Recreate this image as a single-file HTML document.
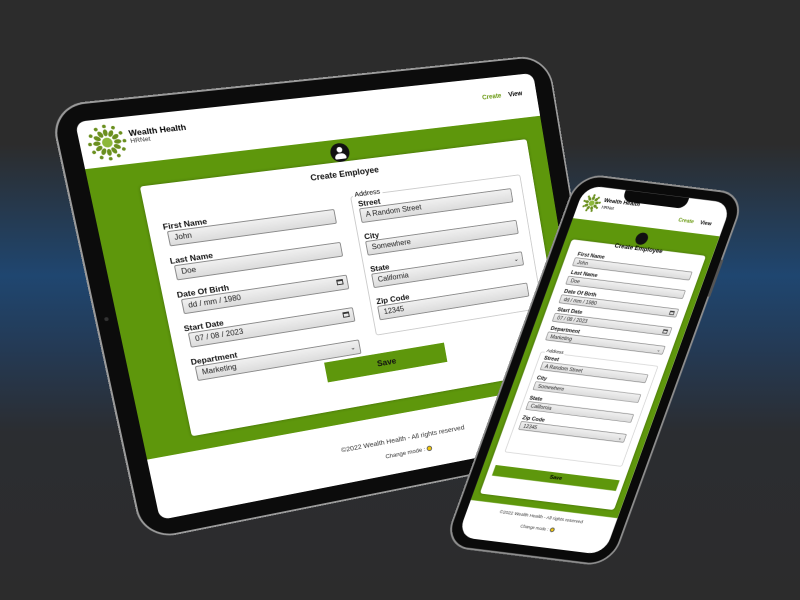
<!DOCTYPE html>
<html><head><meta charset="utf-8">
<style>
*{margin:0;padding:0;box-sizing:border-box}
html,body{width:800px;height:600px;overflow:hidden}
body{position:relative;font-family:"Liberation Sans",sans-serif;
background:linear-gradient(to bottom,#2c2c2c 0%,#2c2c2c 24%,#1f4670 46%,#243a55 58%,#2b2d31 72%,#2c2c2c 100%);}
.abs{position:absolute;white-space:nowrap}
.dev{position:absolute;left:0;top:0;transform-origin:0 0}
.tscreen{width:480px;height:420px;background:#fff;border-radius:10px;overflow:hidden;position:absolute;left:0;top:0}
.green{position:absolute;left:0;background:#5e970c}
.card{position:absolute;background:#fff;border-radius:3px;box-shadow:0 0 3px rgba(0,0,0,.3)}
.lbl{position:absolute;font-weight:bold;font-size:8px;color:#111;white-space:nowrap}
.inp{position:absolute;background:linear-gradient(#f0f0f0,#dcdcdc);border:1px solid #8a8a8a;border-radius:2px;font-size:7.5px;color:#222;padding-left:5px;line-height:12px;white-space:nowrap}
.t .lbl{font-size:8.5px}
.t .inp{font-size:8px;line-height:14px}
.cal{position:absolute;right:4px;top:3px;width:7px;height:6px;border:1px solid #333;border-top-width:2px}
.chev{position:absolute;right:4px;top:1px;font-size:7px;color:#333}
</style></head><body>

<!-- TABLET -->
<div class="dev t" style="transform:matrix3d(1.07569,-0.08544,0,0.000228,0.21860,1.00033,0,0.00010136,0,0,1,0,75,122,0,1)">
  <div class="abs" style="left:-21px;top:-19px;width:522px;height:458px;border-radius:34px;background:#9a9a9a"></div>
  <div class="abs" style="left:-19px;top:-17px;width:518px;height:454px;border-radius:32px;background:#0c0c0c"></div>
  <div class="abs" style="left:-12px;top:200px;width:4px;height:4px;border-radius:50%;background:#333"></div>
  <div class="tscreen">
    <svg class="abs" style="left:6px;top:4px" width="40" height="40" viewBox="-20 -20 40 40">
      <g fill="#6a8f1e">
        <circle r="5" fill="#8cb83a"/>
        <g id="r1"><ellipse cx="0" cy="-10" rx="2.2" ry="3.5"/><ellipse cx="0" cy="-16.5" rx="1.8" ry="1.8"/></g>
        <use href="#r1" transform="rotate(30)"/><use href="#r1" transform="rotate(60)"/><use href="#r1" transform="rotate(90)"/>
        <use href="#r1" transform="rotate(120)"/><use href="#r1" transform="rotate(150)"/><use href="#r1" transform="rotate(180)"/>
        <use href="#r1" transform="rotate(210)"/><use href="#r1" transform="rotate(240)"/><use href="#r1" transform="rotate(270)"/>
        <use href="#r1" transform="rotate(300)"/><use href="#r1" transform="rotate(330)"/>
      </g>
    </svg>
    <div class="abs" style="left:48px;top:12px;font-size:8.5px;font-weight:bold">Wealth Health</div>
    <div class="abs" style="left:48px;top:22px;font-size:6.5px;color:#333">HRNet</div>
    <div class="abs" style="left:418px;top:18px;font-size:7px;font-weight:bold;color:#6a9a12">Create</div>
    <div class="abs" style="left:448px;top:18px;font-size:7px;font-weight:bold">View</div>
    <div class="green" style="top:48px;width:480px;height:306px"></div>
    <div class="card" style="left:48px;top:72px;width:412px;height:266px"></div>
    <div class="abs" style="left:244px;top:52px;width:20px;height:20px;border-radius:50%;background:#111"></div>
    <div class="abs" style="left:251px;top:56px;width:6px;height:6px;border-radius:50%;background:#fff"></div>
    <div class="abs" style="left:248px;top:63px;width:12px;height:6px;border-radius:6px 6px 2px 2px;background:#fff"></div>
    <div class="abs" style="left:205px;top:80px;width:100px;text-align:center;font-size:9px;font-weight:bold;color:#111">Create Employee</div>

    <div class="lbl" style="left:62px;top:111px">First Name</div>
    <div class="inp" style="left:65px;top:121px;width:172px;height:16px">John</div>
    <div class="lbl" style="left:62px;top:147px">Last Name</div>
    <div class="inp" style="left:65px;top:157px;width:172px;height:16px">Doe</div>
    <div class="lbl" style="left:62px;top:183px">Date Of Birth</div>
    <div class="inp" style="left:65px;top:193px;width:172px;height:16px">dd / mm / 1980<span class="cal"></span></div>
    <div class="lbl" style="left:62px;top:219px">Start Date</div>
    <div class="inp" style="left:65px;top:229px;width:172px;height:16px">07 / 08 / 2023<span class="cal"></span></div>
    <div class="lbl" style="left:62px;top:255px">Department</div>
    <div class="inp" style="left:65px;top:265px;width:172px;height:16px">Marketing<span class="chev">&#8964;</span></div>

    <div class="abs" style="left:256px;top:110px;width:190px;height:154px;border:1px solid #ccc;border-radius:3px"></div>
    <div class="abs" style="left:259px;top:104px;font-size:7.5px;background:#fff;padding:0 2px">Address</div>
    <div class="lbl" style="left:263px;top:114px">Street</div>
    <div class="inp" style="left:263px;top:124px;width:170px;height:16px">A Random Street</div>
    <div class="lbl" style="left:263px;top:150px">City</div>
    <div class="inp" style="left:263px;top:160px;width:170px;height:16px">Somewhere</div>
    <div class="lbl" style="left:263px;top:186px">State</div>
    <div class="inp" style="left:263px;top:196px;width:170px;height:16px">California<span class="chev">&#8964;</span></div>
    <div class="lbl" style="left:263px;top:222px">Zip Code</div>
    <div class="inp" style="left:263px;top:232px;width:170px;height:16px">12345</div>

    <div class="abs" style="left:196px;top:284px;width:132px;height:22px;background:#5e970c;color:#111;font-weight:bold;font-size:9px;text-align:center;line-height:22px">Save</div>

    <div class="abs" style="left:165px;top:378px;width:200px;text-align:center;font-size:7.5px;color:#333">©2022 Wealth Health - All rights reserved</div>
    <div class="abs" style="left:218px;top:396px;width:100px;text-align:center;font-size:6.5px;color:#333">Change mode : <span style="display:inline-block;width:6px;height:6px;border-radius:50%;background:#f2c80f;border:1px solid #555;vertical-align:middle"></span></div>
  </div>
</div>

<!-- PHONE -->
<div class="dev" style="left:585px;top:185px;transform:matrix(0.906,0.1125,-0.334,0.921,0,0)">
  <div class="abs" style="left:-12px;top:-12px;width:186px;height:406px;border-radius:28px;background:#8e8e8e"></div>
  <div class="abs" style="left:-10px;top:-10px;width:182px;height:402px;border-radius:26px;background:#0a0a0a"></div>
  <div class="abs" style="left:172px;top:60px;width:3px;height:40px;background:#555"></div>
  <div class="abs" style="left:0;top:0;width:162px;height:382px;border-radius:18px;background:#fff;overflow:hidden">
    <div class="abs" style="left:45px;top:-2px;width:70px;height:14px;border-radius:0 0 9px 9px;background:#0a0a0a"></div>
    <svg class="abs" style="left:4px;top:8px" width="20" height="20" viewBox="-20 -20 40 40">
      <g fill="#6a8f1e"><circle r="6" fill="#8cb83a"/>
      <g id="r2"><ellipse cx="0" cy="-11" rx="3" ry="4"/><circle cx="0" cy="-17" r="2.3"/></g>
      <use href="#r2" transform="rotate(40)"/><use href="#r2" transform="rotate(80)"/><use href="#r2" transform="rotate(120)"/>
      <use href="#r2" transform="rotate(160)"/><use href="#r2" transform="rotate(200)"/><use href="#r2" transform="rotate(240)"/>
      <use href="#r2" transform="rotate(280)"/><use href="#r2" transform="rotate(320)"/></g>
    </svg>
    <div class="abs" style="left:26px;top:11px;font-size:6px;font-weight:bold">Wealth Health</div>
    <div class="abs" style="left:26px;top:18px;font-size:4.5px">HRNet</div>
    <div class="abs" style="left:112px;top:22px;font-size:5.5px;font-weight:bold;color:#6a9a12">Create</div>
    <div class="abs" style="left:136px;top:22px;font-size:5.5px;font-weight:bold">View</div>
    <div class="green" style="top:36px;width:162px;height:306px"></div>
    <div class="card" style="left:7px;top:58px;width:148px;height:276px"></div>
    <div class="abs" style="left:74px;top:42px;width:13px;height:13px;border-radius:50%;background:#111"></div>
    <div class="abs" style="left:40px;top:56px;width:82px;text-align:center;font-size:6.5px;font-weight:bold">Create Employee</div>

    <div style="position:absolute;left:0;top:0;width:225px;height:500px;transform:scale(0.72);transform-origin:0 0">
      <div class="lbl" style="left:26px;top:96px">First Name</div>
      <div class="inp" style="left:24px;top:106px;width:180px;height:13px">John</div>
      <div class="lbl" style="left:26px;top:124px">Last Name</div>
      <div class="inp" style="left:24px;top:134px;width:180px;height:13px">Doe</div>
      <div class="lbl" style="left:26px;top:152px">Date Of Birth</div>
      <div class="inp" style="left:24px;top:162px;width:180px;height:13px">dd / mm / 1980<span class="cal"></span></div>
      <div class="lbl" style="left:26px;top:180px">Start Date</div>
      <div class="inp" style="left:24px;top:190px;width:180px;height:13px">07 / 08 / 2023<span class="cal"></span></div>
      <div class="lbl" style="left:26px;top:208px">Department</div>
      <div class="inp" style="left:24px;top:218px;width:180px;height:13px">Marketing<span class="chev">&#8964;</span></div>
      <div class="abs" style="left:24px;top:248px;width:180px;height:152px;border:1px solid #ccc;border-radius:3px"></div>
      <div class="abs" style="left:30px;top:243px;font-size:7px;background:#fff;padding:0 2px">Address</div>
      <div class="lbl" style="left:32px;top:252px">Street</div>
      <div class="inp" style="left:32px;top:262px;width:162px;height:13px">A Random Street</div>
      <div class="lbl" style="left:32px;top:282px">City</div>
      <div class="inp" style="left:32px;top:292px;width:162px;height:13px">Somewhere</div>
      <div class="lbl" style="left:32px;top:312px">State</div>
      <div class="inp" style="left:32px;top:322px;width:162px;height:13px">California</div>
      <div class="lbl" style="left:32px;top:342px">Zip Code</div>
      <div class="inp" style="left:32px;top:352px;width:162px;height:13px">12345<span class="chev">&#8964;</span></div>
      <div class="abs" style="left:18px;top:420px;width:190px;height:16px;background:#5e970c;font-weight:bold;font-size:8px;text-align:center;line-height:16px">Save</div>
    </div>
    <div class="abs" style="left:0;top:348px;width:162px;text-align:center;font-size:5px;color:#333">©2022 Wealth Health - All rights reserved</div>
    <div class="abs" style="left:0;top:360px;width:162px;text-align:center;font-size:4.5px;color:#333">Change mode : <span style="display:inline-block;width:5px;height:5px;border-radius:50%;background:#f2c80f;border:1px solid #555;vertical-align:middle"></span></div>
  </div>
</div>
</body></html>
